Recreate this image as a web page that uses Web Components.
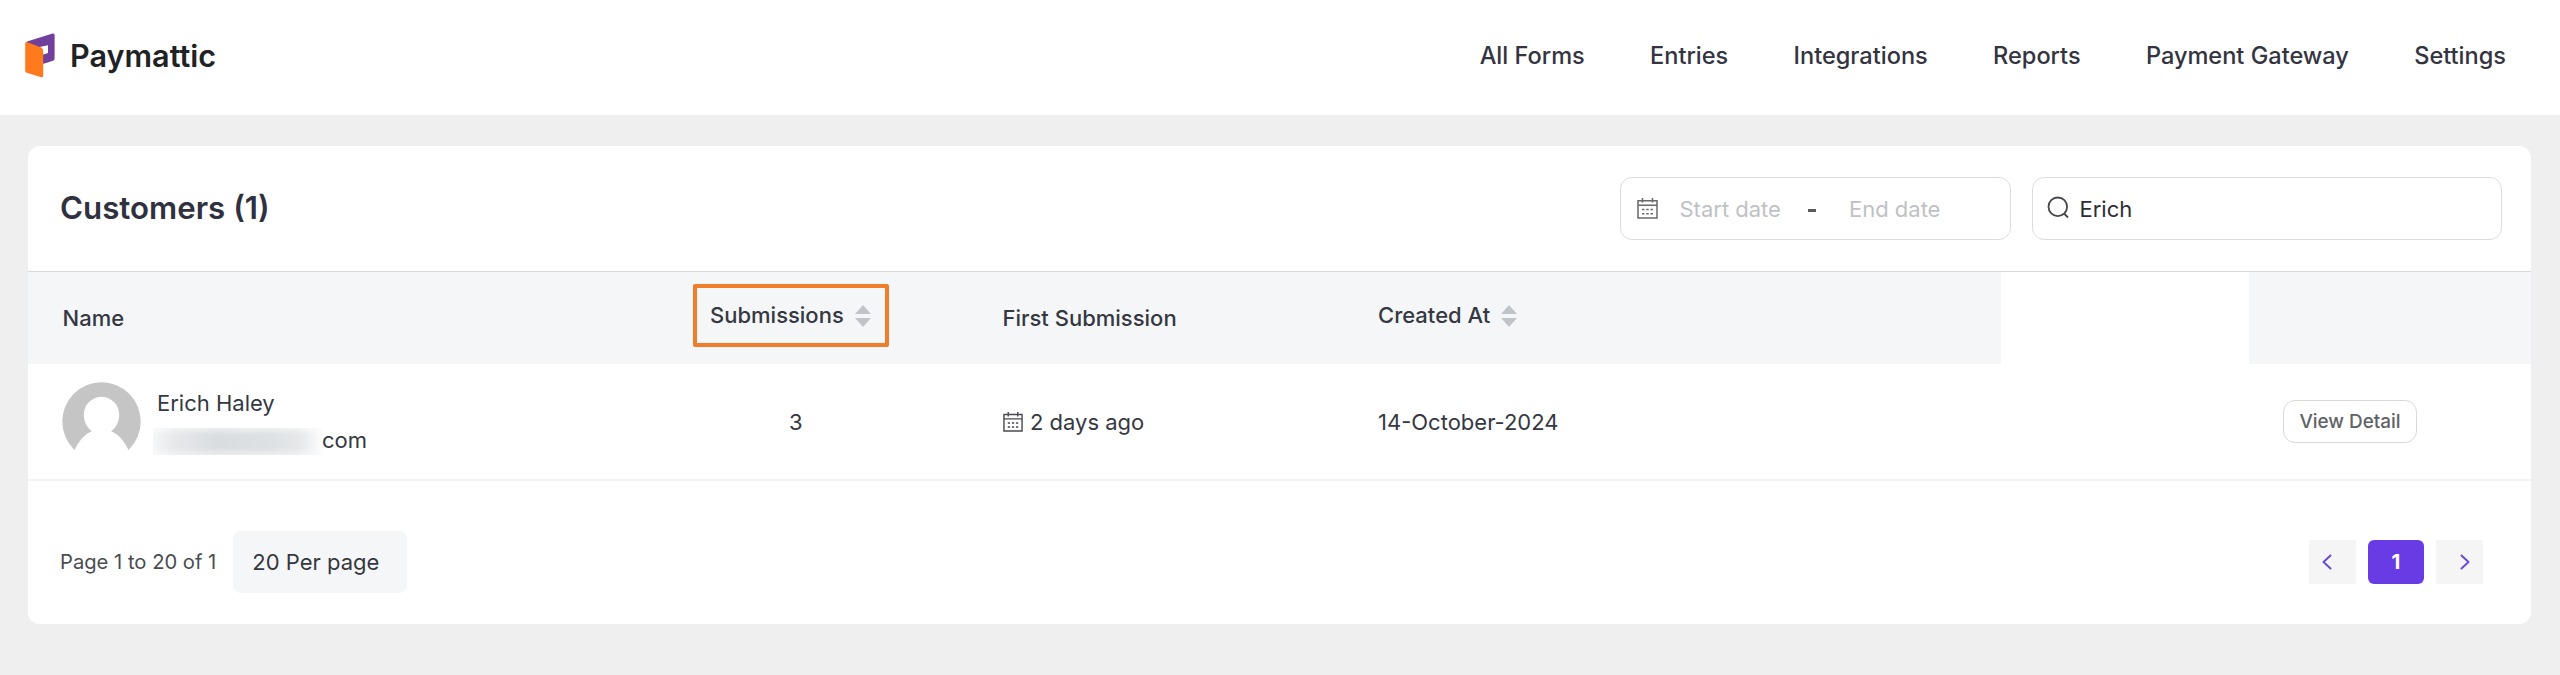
<!DOCTYPE html>
<html lang="en">
<head>
<meta charset="utf-8">
<title>Paymattic</title>
<style>
body { margin: 0; background: #efefef; font-family: Inter, "Liberation Sans", sans-serif; font-size: 22px; color: #353842; }
</style>
</head>
<body>
<pm-app></pm-app>
<script>
const define = (name, html) => customElements.define(name, class extends HTMLElement {
  constructor() {
    super();
    const t = document.createElement('template');
    t.innerHTML = html;
    this.attachShadow({ mode: 'open' }).append(t.content.cloneNode(true));
  }
});

define('pm-logo', `
<style>
:host { display: flex; align-items: center; font-size: 30.6px; font-weight: 600; line-height: 40px; color: #1f2326; }
svg { width: 32px; height: 48px; display: block; margin-right: 14px; }
</style>
<svg viewBox="0 0 32 48">
  <path d="M3 9.600 28.600 1.500q2-.5 2 1.400V26.500q0 1.700-1.600 2.200L18 32.300V22l6-2.200V13.700L13 16 2 12Z" fill="#70409c"/>
  <path d="M13.500 15.400 24 13.300V21L18 23Z" fill="#fff"/>
  <path d="M1.200 11.600q0-2 2.200-1.300L16.600 15.200q2.600 1 2.600 3.500V43.800q0 2-2 1.400L2.800 40.700q-1.600-.5-1.600-2.200Z" fill="#ff7a1c"/>
</svg><slot></slot>`);

define('pm-nav', `
<style>
:host { display: flex; gap: 65.300px; font-size: 23.550px; font-weight: 500; line-height: 32px; color: #33343f; white-space: nowrap; }
</style><slot></slot>`);

define('pm-header', `
<style>
:host { display: flex; justify-content: space-between; align-items: center; height: 115px; box-sizing: border-box; padding: 0 54px 4px 24px; background: #fff; }
</style>
<pm-logo>Paymattic</pm-logo>
<pm-nav><span>All Forms</span><span>Entries</span><span>Integrations</span><span>Reports</span><span>Payment Gateway</span><span>Settings</span></pm-nav>`);

define('pm-calendar', `
<style>
:host { display: block; width: 21px; height: 21px; }
svg { display: block; width: 100%; height: 100%; }
</style>
<svg viewBox="0 0 21 21" fill="none" stroke="currentColor" stroke-width="1.500">
  <path d="M1 2.700H20V20H1ZM1 7.200H20M5.500 0V4.600M15.500 0V4.600"/>
  <path d="M5 11.600h2.400M9.300 11.600h2.400M13.600 11.600H16M5 15.700h2.400M9.300 15.700h2.400M13.600 15.700H16"/>
</svg>`);

define('pm-date-range', `
<style>
:host { display: flex; align-items: center; width: 391px; height: 63px; box-sizing: border-box; padding-left: 16px; border: 1px solid #dadcde; border-radius: 12px; line-height: 30px; color: #bfc1c4; }
pm-calendar { color: #67686c; margin-right: 22px; }
i { width: 8px; height: 3px; background: #5a5b60; margin: 4px 33px 0 27px; }
span { padding-top: 1px; white-space: nowrap; }
</style>
<pm-calendar></pm-calendar><span>Start date</span><i></i><span>End date</span>`);

define('pm-search', `
<style>
:host { display: flex; align-items: center; width: 470px; height: 63px; box-sizing: border-box; padding-left: 14px; border: 1px solid #dadcde; border-radius: 12px; line-height: 30px; color: #2c2d33; }
svg { width: 23px; height: 23px; display: block; margin: 0 10px 3px 0; }
span { padding-top: 1px; }
</style>
<svg viewBox="0 0 23 23" fill="none" stroke="#45464b" stroke-width="1.800"><circle cx="10.800" cy="10.800" r="9.300"/><path d="M17 17.500 21 21.500"/></svg>
<span><slot></slot></span>`);

define('pm-toolbar', `
<style>
:host { display: flex; align-items: center; height: 125px; padding: 0 29.500px 0 32px; border-bottom: 1px solid #d6d9dc; }
h1 { margin: 0 0 2px; flex: 1; font-size: 31.250px; line-height: 40px; font-weight: 600; color: #30313f; }
pm-search { margin-left: 21px; }
</style>
<h1>Customers (1)</h1>
<pm-date-range></pm-date-range>
<pm-search>Erich</pm-search>`);

define('pm-sort', `
<style>
:host { display: block; }
svg { display: block; width: 16px; height: 22px; }
</style>
<svg viewBox="0 0 16 22"><path d="M8 0 16 9H0ZM0 13H16L8 22Z" fill="#c0c3c7"/></svg>`);

define('pm-row', `
<style>
:host { display: grid; grid-template-columns: 645px 329.500px 375.500px 623px 248px 282px; }
</style><slot></slot>`);

define('pm-th', `
<style>
:host { display: flex; align-items: center; height: 92px; box-sizing: border-box; background: #f4f6f8; font-weight: 500; line-height: 30px; white-space: nowrap; }
:host([blank]) { background: #fff; }
:host([sortable]) { padding-bottom: 6px; }
:host([first]) { padding-left: 34.500px; }
.box { display: flex; align-items: center; }
:host([marked]) .box { box-sizing: border-box; width: 196px; height: 63px; margin-left: 20px; padding-left: 13px; border: 4px solid #f07d2a; border-radius: 2px; }
pm-sort { margin-left: 11px; display: none; }
:host([sortable]) pm-sort { display: block; padding-top: 2px; }
</style><div class="box"><slot></slot><pm-sort></pm-sort></div>`);

define('pm-customer', `
<style>
:host { display: flex; align-items: center; padding-left: 34px; }
svg { width: 79px; height: 79px; display: block; }
div { margin-left: 12px; line-height: 37px; }
p { margin: 0 0 0 4px; white-space: nowrap; }
.mail { display: flex; align-items: center; margin: 0; }
i { width: 169px; height: 27px; margin: 2px 0 0 0; background: linear-gradient(90deg, #f6f6f7, #e6e8ea 13%, #dadde0 38%, #dee1e3 70%, #e5e7e9 86%, #fcfcfc); -webkit-mask: linear-gradient(#0008, #000 28%, #000 72%, #0009); }
</style>
<svg viewBox="0 0 79 79">
  <circle cx="39.500" cy="39.500" r="39.200" fill="#c5c5c5"/>
  <path d="M12 69C17 59 22 52.500 30 49.300 24.500 45.500 21.800 39 21.800 32.500a17.700 17.700 0 0 1 35.400 0C57.200 39 54.500 45.500 49 49.300 57 52.500 62 59 67 69V80H12Z" fill="#fff"/>
</svg>
<div><p>Erich Haley</p><p class="mail"><i></i><span>com</span></p></div>`);

define('pm-td', `
<style>
:host { display: flex; align-items: center; line-height: 30px; white-space: nowrap; }
</style><slot></slot>`);

define('pm-button', `
<style>
:host { display: flex; align-items: center; justify-content: center; box-sizing: border-box; width: 134px; height: 43px; border: 1px solid #d6d8da; border-radius: 12px; font-size: 18.900px; font-weight: 500; color: #606266; }
</style><slot></slot>`);

define('pm-table', `
<style>
:host { display: block; }
.body { height: 115px; border-bottom: 2px solid #f3f3f4; }
.count { padding-left: 116px; }
.date { gap: 7.500px; }
pm-calendar { color: #4a4b50; width: 20px; height: 20px; }
pm-button { margin-left: 34px; }
</style>
<pm-row>
  <pm-th first>Name</pm-th><pm-th sortable marked>Submissions</pm-th><pm-th>First Submission</pm-th><pm-th sortable>Created At</pm-th><pm-th blank></pm-th><pm-th></pm-th>
</pm-row>
<pm-row class="body">
  <pm-customer></pm-customer><pm-td class="count">3</pm-td><pm-td class="date"><pm-calendar></pm-calendar><span>2 days ago</span></pm-td><pm-td>14-October-2024</pm-td><pm-td></pm-td><pm-td><pm-button>View Detail</pm-button></pm-td>
</pm-row>`);

define('pm-pager', `
<style>
:host { display: flex; gap: 12px; }
div { display: flex; align-items: center; justify-content: center; width: 47px; height: 44px; background: #f5f5f5; box-sizing: border-box; }
.prev { padding-right: 12px; }
.next { padding-left: 10px; }
.on { width: 56px; border-radius: 6px; background: #683be4; color: #fff; font-size: 20.500px; font-weight: 700; }
svg { width: 10px; height: 16px; fill: none; stroke: #6a4ad6; stroke-width: 2; stroke-linecap: round; stroke-linejoin: round; }
</style>
<div class="prev"><svg viewBox="0 0 10 16"><path d="M8.500 1.500 1.500 8l7 6.500"/></svg></div>
<div class="on">1</div>
<div class="next"><svg viewBox="0 0 10 16"><path d="M1.500 1.500 8.500 8l-7 6.500"/></svg></div>`);

define('pm-footer', `
<style>
:host { display: flex; align-items: center; height: 143px; box-sizing: border-box; padding: 18px 48px 0 32px; }
.info { font-size: 20.200px; color: #4a4c51; white-space: nowrap; }
.size { box-sizing: border-box; width: 174px; height: 62px; margin: 0 auto 0 17px; padding-left: 19px; line-height: 62px; border-radius: 8px; background: #f4f6f8; color: #36383d; white-space: nowrap; }
</style>
<span class="info">Page 1 to 20 of 1</span><span class="size">20 Per page</span><pm-pager></pm-pager>`);

define('pm-card', `
<style>
:host { display: block; margin: 31px 29px 0 28px; background: #fff; border-radius: 12px; overflow: hidden; }
</style><slot></slot>`);

define('pm-app', `
<style>:host { display: block; }</style>
<pm-header></pm-header>
<pm-card><pm-toolbar></pm-toolbar><pm-table></pm-table><pm-footer></pm-footer></pm-card>`);
</script>
</body>
</html>
